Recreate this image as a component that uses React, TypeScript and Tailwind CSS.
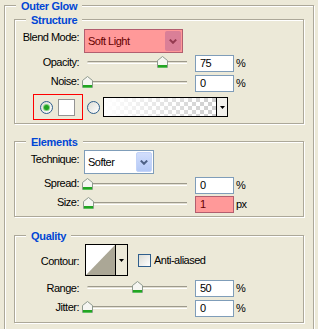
import React from "react";

const TEXT = "font-['Liberation_Sans',Arial,sans-serif] text-[11px] tracking-[-0.5px] text-black";

function GroupBox({ title, className = "", children }: { title: string; className?: string; children?: React.ReactNode }) {
  return (
    <div className={`relative border border-[#aca899] shadow-[inset_1px_1px_0_#ffffff,1px_1px_0_#ffffff] ${className}`}>
      <span className="absolute left-[11px] top-[-6px] bg-[#ece9d8] px-[5px] text-[11px] leading-[12px] font-bold tracking-[-0.3px] text-[#0046d5]">
        {title}
      </span>
      {children}
    </div>
  );
}

function Label({ children, className = "" }: { children: React.ReactNode; className?: string }) {
  return <div className={`w-[64px] shrink-0 text-right leading-[13px] ${className}`}>{children}</div>;
}

function Chevron({ color }: { color: string }) {
  return (
    <svg width="8" height="5" viewBox="0 0 8 5">
      <path d="M0.8 0.6 L4 3.8 L7.2 0.6" stroke={color} strokeWidth="2" fill="none" />
    </svg>
  );
}

function SmallArrow() {
  return (
    <svg width="5" height="3" viewBox="0 0 5 3">
      <path d="M0 0 H5 L2.5 3 Z" fill="#000" />
    </svg>
  );
}

function Thumb() {
  return (
    <svg width="11" height="12" viewBox="0 0 11 12">
      <path d="M0.5 11.5 V4.5 L5.5 0.5 L10.5 4.5 V11.5 Z" fill="#f6f6f2" stroke="#8e9a8e" />
      <rect x="1" y="9" width="9" height="2" fill="#22a522" />
      <rect x="1" y="11" width="9" height="1" fill="#5cbf5c" />
    </svg>
  );
}

function Slider({ value }: { value: number }) {
  return (
    <div className="relative w-[113px] h-[17px] shrink-0">
      <div className="absolute left-[8px] top-[6px] w-[100px] h-[3px] rounded-l-[2px] border-t border-t-[#9d9a8c] border-b border-b-white bg-[#e2dfd2]" />
      <div className="absolute top-[1px]" style={{ left: 8 + value - 5 }}>
        <Thumb />
      </div>
    </div>
  );
}

function NumberField({ value, pink = false }: { value: string; pink?: boolean }) {
  return (
    <div
      className={`ml-[3px] w-[39px] h-[17px] shrink-0 border flex items-center pl-[4px] ${
        pink ? "border-[#b25e6f] bg-[#ff9999] text-[#660000]" : "border-[#7f9db9] bg-white"
      }`}
    >
      {value}
    </div>
  );
}

function SliderRow({ label, value, unit, pink, className = "", lift = "pb-[3px]" }: { label: string; value: number; unit: string; pink?: boolean; className?: string; lift?: string }) {
  return (
    <div className={`flex items-center h-[17px] ${className}`}>
      <Label className={lift}>{label}</Label>
      <Slider value={value} />
      <NumberField value={String(value)} pink={pink} />
      <span className="ml-[2px]">{unit}</span>
    </div>
  );
}

function Radio({ checked = false }: { checked?: boolean }) {
  return (
    <span className="w-[13px] h-[13px] shrink-0 rounded-full border border-[#2f5e8c] bg-[linear-gradient(135deg,#dcdcd5,#ffffff)] flex items-center justify-center">
      {checked && <span className="w-[5px] h-[5px] rounded-full bg-[#21a121] shadow-[0_0_0_1px_#7fd07f]" />}
    </span>
  );
}

export default function App() {
  return (
    <div className={`w-[318px] h-[329px] overflow-hidden bg-[#ece9d8] pt-[5px] ${TEXT}`}>
      <GroupBox title="Outer Glow" className="ml-[4px] w-[310px] h-[340px] px-[9px] pt-[13px]">
        {/* Structure */}
        <GroupBox title="Structure" className="flex flex-col pt-[9px] pb-[3px]">
          <div className="flex items-center h-[24px]">
            <Label className="pb-[7px]">Blend Mode:</Label>
            <div className="ml-[5px] w-[99px] h-[24px] border border-[#b25e6f] bg-[#ff9999] flex p-[1px]">
              <span className="flex-1 pl-[2px] flex items-center text-[#660000]">Soft Light</span>
              <span className="w-[16px] rounded-[2px] bg-[#da7f97] flex items-center justify-center">
                <Chevron color="#943a50" />
              </span>
            </div>
          </div>
          <SliderRow label="Opacity:" value={75} unit="%" className="mt-[2px]" />
          <SliderRow label="Noise:" value={0} unit="%" className="mt-[3px]" lift="pb-[4px]" />
          <div className="flex items-center h-[26px] mt-[2px]">
            <div className="ml-[18px] w-[50px] h-[26px] border border-[#ff0000] flex items-center pl-[6px] gap-[5px]">
              <Radio checked />
              <span className="w-[17px] h-[17px] border border-[#949494] bg-white" />
            </div>
            <span className="ml-[4px]">
              <Radio />
            </span>
            <div className="ml-[3px] w-[125px] h-[20px] border border-black flex">
              <div className="flex-1 bg-[linear-gradient(to_right,#ffffff,rgba(255,255,255,0)),repeating-conic-gradient(#cdcdcd_0%_25%,#ffffff_0%_50%)] bg-[length:100%_100%,8px_8px]" />
              <div className="w-[11px] border-l border-black bg-[#f2f1ec] flex items-center justify-center">
                <SmallArrow />
              </div>
            </div>
          </div>
        </GroupBox>

        {/* Elements */}
        <GroupBox title="Elements" className="mt-[17px] flex flex-col pt-[8px] pb-[3px]">
          <div className="flex items-center h-[24px]">
            <Label className="pb-[5px]">Technique:</Label>
            <div className="ml-[5px] w-[70px] h-[24px] border border-[#7f9db9] bg-white flex p-[1px]">
              <span className="flex-1 pl-[2px] flex items-center">Softer</span>
              <span className="w-[16px] rounded-[2px] border border-[#c3d3f8] bg-[linear-gradient(180deg,#d2defc,#b4c9f6)] flex items-center justify-center">
                <Chevron color="#4d6185" />
              </span>
            </div>
          </div>
          <SliderRow label="Spread:" value={0} unit="%" className="mt-[3px]" lift="pb-[5px]" />
          <SliderRow label="Size:" value={1} unit="px" pink className="mt-[2px]" lift="pb-[4px]" />
        </GroupBox>

        {/* Quality */}
        <GroupBox title="Quality" className="mt-[18px] flex flex-col pt-[8px] pb-[5px]">
          <div className="flex items-center h-[32px]">
            <Label className="pt-[2px]">Contour:</Label>
            <div className="ml-[6px] w-[43px] h-[32px] border border-black flex">
              <div className="w-[29px] bg-white">
                <svg width="29" height="30" viewBox="0 0 29 30" className="block">
                  <polygon points="0,30 29,0 29,30" fill="#aba796" />
                </svg>
              </div>
              <div className="flex-1 border-l border-black bg-[#ece9d8] flex items-center justify-center">
                <SmallArrow />
              </div>
            </div>
            <span className="ml-[10px] w-[13px] h-[13px] border border-[#2f5e8c] bg-[linear-gradient(135deg,#dcdcd5,#ffffff)]" />
            <span className="ml-[3px]">Anti-aliased</span>
          </div>
          <SliderRow label="Range:" value={50} unit="%" className="mt-[4px]" lift="pb-[1px]" />
          <SliderRow label="Jitter:" value={0} unit="%" className="mt-[3px]" lift="pb-[3px]" />
        </GroupBox>
      </GroupBox>
    </div>
  );
}
